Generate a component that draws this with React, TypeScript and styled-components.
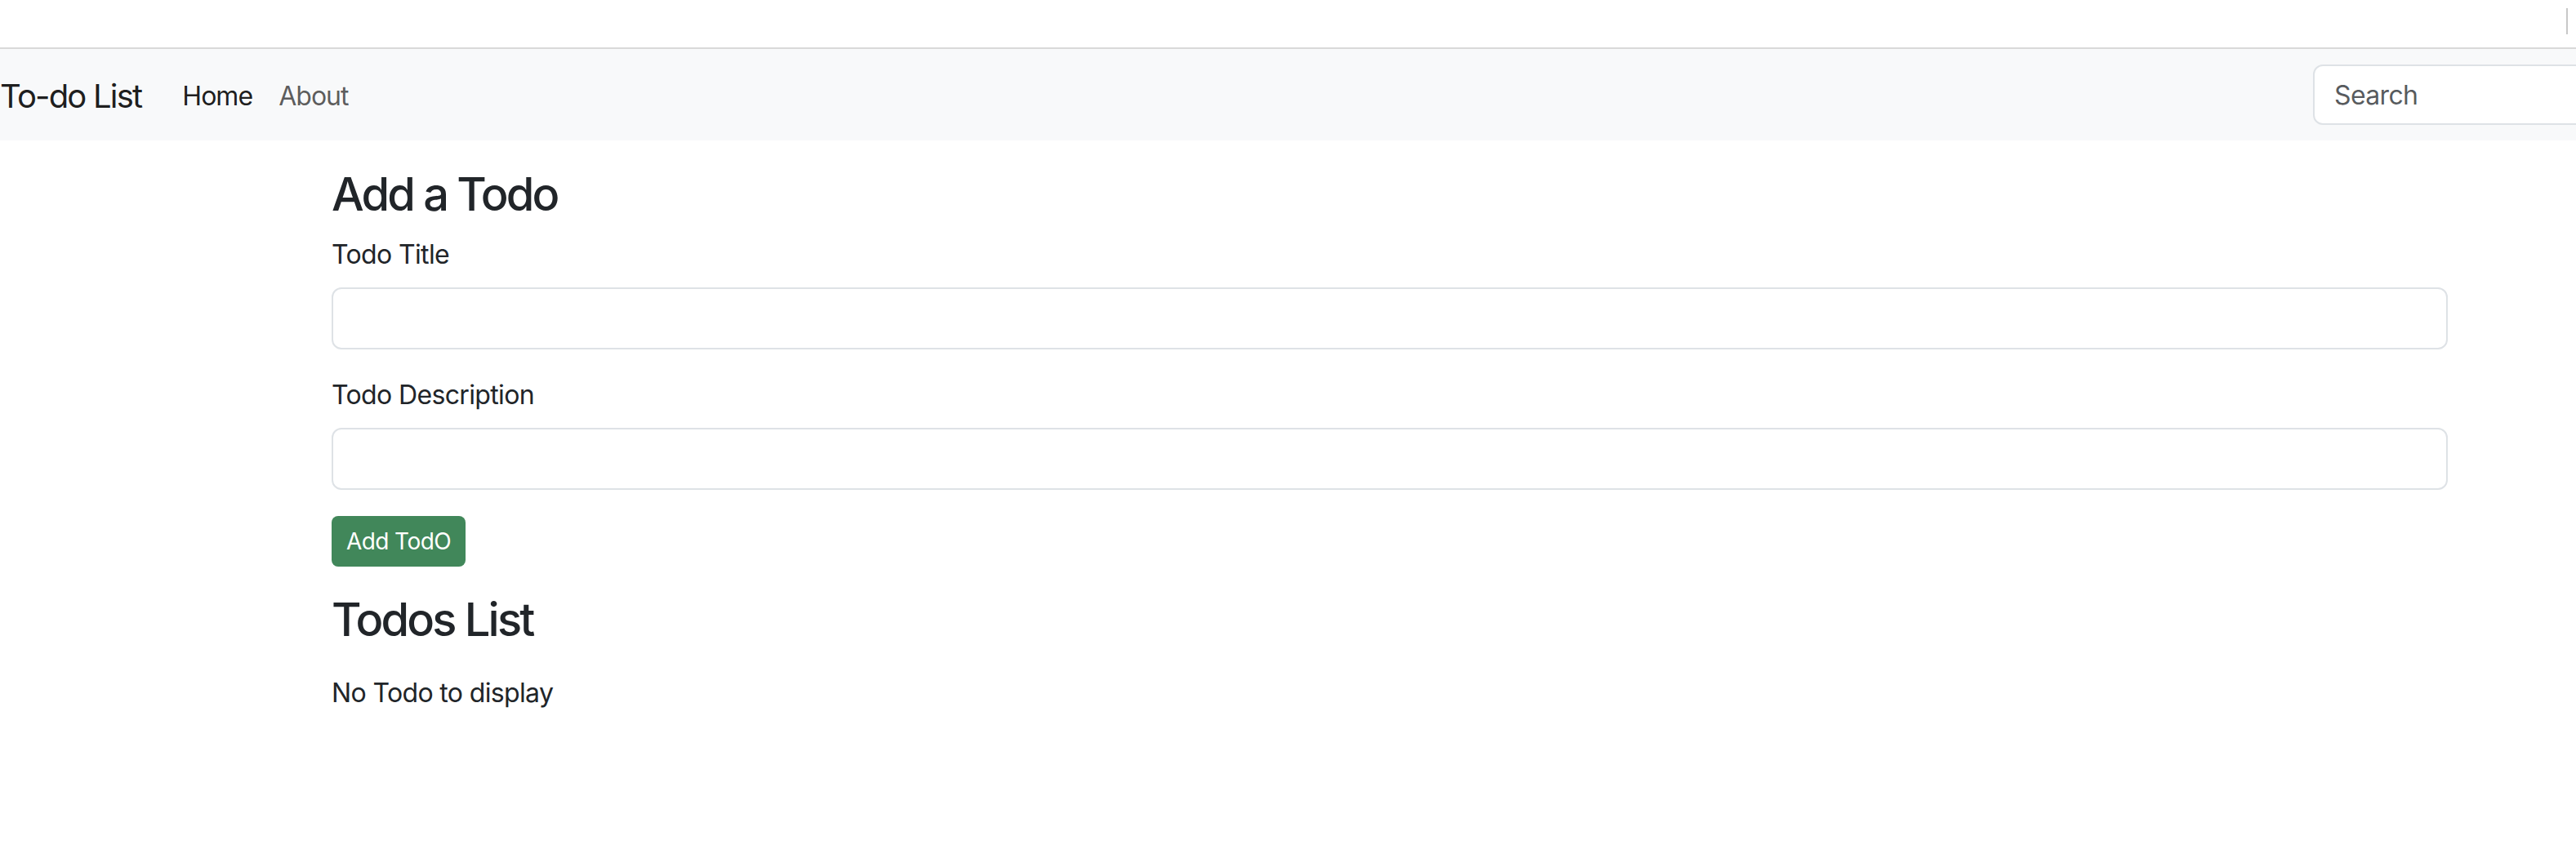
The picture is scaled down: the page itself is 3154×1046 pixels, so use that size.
import React from "react";
import styled, { createGlobalStyle } from "styled-components";

const GlobalStyle = createGlobalStyle`
  html, body {
    margin: 0;
    padding: 0;
    background: #ffffff;
    overflow: hidden;
  }
  body {
    font-family: Inter, "Noto Sans", "Liberation Sans", sans-serif;
    color: #212529;
    font-size: 32px;
    line-height: 48px;
    letter-spacing: -0.02em;
  }
  * { box-sizing: border-box; }
`;

const Page = styled.div`
  width: 3154px;
  min-height: 1046px;
  overflow: hidden;
`;

const TopStrip = styled.div`
  height: 60px;
  border-bottom: 2px solid #d9d9d9;
  display: flex;
  justify-content: flex-end;
  align-items: flex-start;
`;

const Caret = styled.span`
  display: block;
  width: 2px;
  height: 32px;
  margin-top: 10px;
  margin-right: 10px;
  background: #c8c8c8;
`;

const Navbar = styled.nav`
  height: 112px;
  background: #f8f9fa;
  display: flex;
  align-items: center;
  overflow: hidden;
`;

const Brand = styled.a`
  font-size: 40px;
  line-height: 60px;
  letter-spacing: -0.045em;
  padding: 12px 0 8px;
  margin-right: 34px;
  color: rgba(0, 0, 0, 0.9);
  text-decoration: none;
  white-space: nowrap;
`;

const NavList = styled.ul`
  display: flex;
  list-style: none;
  margin: 0;
  padding: 0;
  flex: 1;
`;

const NavLink = styled.a<{ $active?: boolean }>`
  display: block;
  padding: 18px 16px 14px;
  font-size: 32px;
  line-height: 48px;
  letter-spacing: -0.03em;
  color: ${(p) => (p.$active ? "rgba(0,0,0,0.9)" : "rgba(0,0,0,0.65)")};
  text-decoration: none;
`;

const SearchForm = styled.form`
  flex: 0 0 auto;
  width: 560px;
  margin-right: -238px;
  display: flex;
`;

const SearchInput = styled.input`
  width: 100%;
  height: 74px;
  border: 2px solid #dee2e6;
  border-radius: 12px;
  padding: 0 24px;
  font-family: inherit;
  font-size: 32px;
  letter-spacing: -0.02em;
  color: #212529;
  background: #ffffff;
  outline: none;
  &::placeholder {
    color: rgba(33, 37, 41, 0.75);
  }
`;

const Container = styled.main`
  margin-left: 406px;
  width: 2591px;
`;

const Heading = styled.h3<{ $top: number; $bottom: number }>`
  font-size: 56px;
  line-height: 67px;
  font-weight: 500;
  letter-spacing: -0.05em;
  margin: ${(p) => p.$top}px 0 ${(p) => p.$bottom}px;
`;

const Field = styled.div`
  margin-bottom: 32px;
`;

const Label = styled.label`
  display: block;
  font-size: 32px;
  line-height: 48px;
  margin-bottom: 16px;
`;

const TextInput = styled.input`
  display: block;
  width: 100%;
  height: 76px;
  border: 2px solid #dee2e6;
  border-radius: 12px;
  padding: 0 24px;
  font-family: inherit;
  font-size: 32px;
  background: #ffffff;
  outline: none;
`;

const SubmitButton = styled.button`
  display: block;
  height: 62px;
  width: 164px;
  padding: 0;
  border: none;
  border-radius: 8px;
  background: #41875a;
  color: #ffffff;
  font-family: inherit;
  font-size: 28px;
  line-height: 42px;
  letter-spacing: -0.02em;
  white-space: nowrap;
  text-align: center;
  cursor: pointer;
`;

const EmptyText = styled.p`
  margin: 0;
  font-size: 32px;
  line-height: 48px;
`;

export default function App() {
  return (
    <Page>
      <GlobalStyle />
      <TopStrip>
        <Caret />
      </TopStrip>
      <Navbar>
        <Brand href="#">To-do List</Brand>
        <NavList>
          <li>
            <NavLink href="#" $active>
              Home
            </NavLink>
          </li>
          <li>
            <NavLink href="#">About</NavLink>
          </li>
        </NavList>
        <SearchForm onSubmit={(e) => e.preventDefault()}>
          <SearchInput type="search" placeholder="Search" aria-label="Search" />
        </SearchForm>
      </Navbar>
      <Container>
        <Heading $top={33} $bottom={16}>
          Add a Todo
        </Heading>
        <form onSubmit={(e) => e.preventDefault()}>
          <Field>
            <Label htmlFor="title">Todo Title</Label>
            <TextInput id="title" type="text" />
          </Field>
          <Field>
            <Label htmlFor="desc">Todo Description</Label>
            <TextInput id="desc" type="text" />
          </Field>
          <SubmitButton type="submit">Add TodO</SubmitButton>
        </form>
        <Heading $top={32} $bottom={32}>
          Todos List
        </Heading>
        <EmptyText>No Todo to display</EmptyText>
      </Container>
    </Page>
  );
}
